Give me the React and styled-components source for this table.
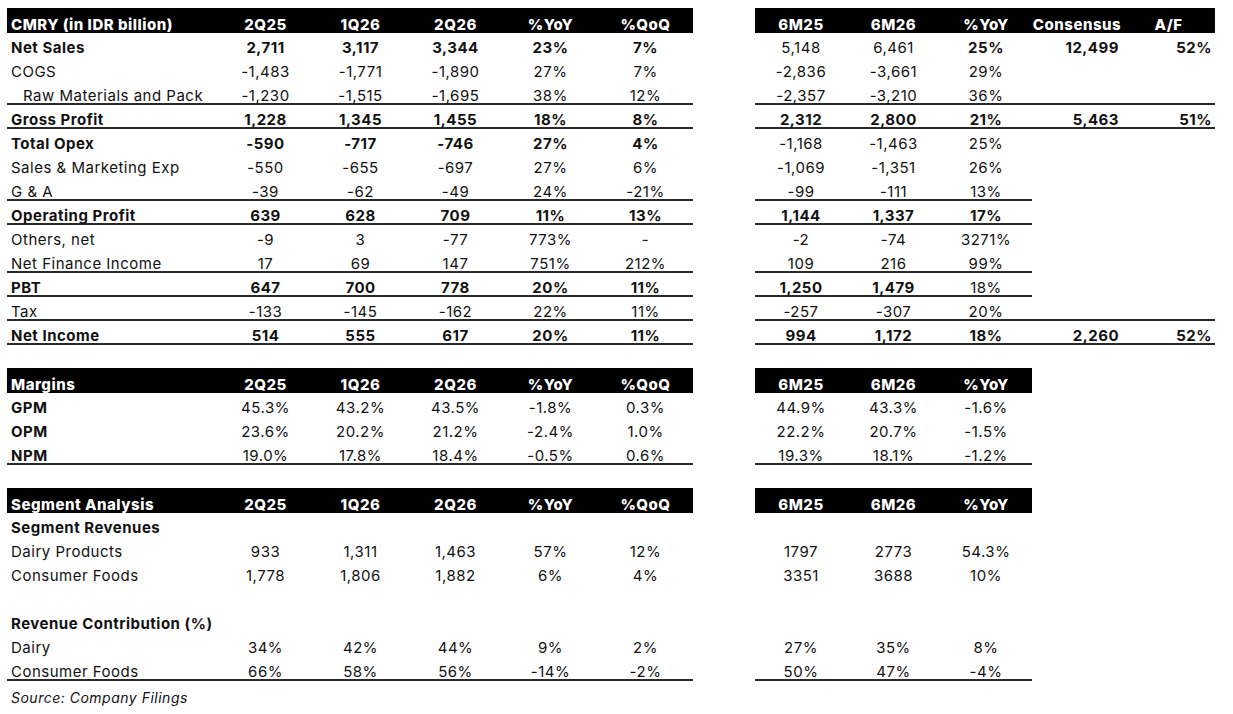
import React from "react";
import styled, { createGlobalStyle } from "styled-components";

const GlobalStyle = createGlobalStyle`
  html, body { margin: 0; background: #fff; }
  body {
    padding: 8px 0 0 7px;
    font-family: Inter, "Noto Sans", "DejaVu Sans", sans-serif;
    color: #111;
    letter-spacing: 0.5px;
    -webkit-font-smoothing: antialiased;
  }
`;

const LEFT_COLS = "211px repeat(5, 95px)";
const RIGHT_FULL = "92px 93px 92px 90px 93px";
const RIGHT_SHORT = "92px 93px 92px";
const LINE = "#2b2b2b";

const Page = styled.div`
  display: flex;
  flex-direction: column;
  gap: 23px;
`;

const Section = styled.section`
  display: flex;
  gap: 62px;
  align-items: flex-start;
`;

const Table = styled.div`
  display: flex;
  flex-direction: column;
`;

const HeaderBar = styled.div`
  display: grid;
  grid-template-columns: ${(p) => p.$cols};
  height: 25px;
  background: #000;
  color: #fff;
  font-weight: 800;
  font-size: 15px;
  line-height: 17px;
  align-items: end;
  box-sizing: border-box;
`;

const HeadCell = styled.div`
  text-align: ${(p) => (p.$left ? "left" : "center")};
  padding-left: ${(p) => (p.$left ? "4px" : "0")};
  white-space: nowrap;
`;

const Row = styled.div`
  display: grid;
  grid-template-columns: ${(p) => p.$cols};
  height: 24px;
  align-items: end;
  font-size: 15px;
  line-height: 18px;
  box-sizing: border-box;
  background: ${(p) =>
    p.$line
      ? `linear-gradient(${LINE}, ${LINE}) no-repeat left bottom / ${p.$line} 2px`
      : "none"};
`;

const Label = styled.div`
  padding-left: ${(p) => (p.$indent ? "16px" : "4px")};
  font-weight: ${(p) => (p.$bold ? 700 : 400)};
  white-space: nowrap;
`;

const Cell = styled.div`
  text-align: ${(p) => (p.$right ? "right" : "center")};
  padding-right: ${(p) => (p.$right ? "3px" : "0")};
  font-weight: ${(p) => (p.$bold ? 700 : 400)};
  white-space: nowrap;
`;

const Source = styled.div`
  font-style: italic;
  font-size: 14px;
  padding: 8px 0 0 4px;
`;

const v = (s, b = false) => ({ s, b });
const B = (arr) => arr.map((s) => v(s, true));
const N = (arr) => arr.map((s) => v(s, false));

const incomeRows = [
  { label: "Net Sales", bold: true, left: B(["2,711", "3,117", "3,344", "23%", "7%"]),
    right: [v("5,148"), v("6,461"), v("25%", true), v("12,499", true), v("52%", true)] },
  { label: "COGS", left: N(["-1,483", "-1,771", "-1,890", "27%", "7%"]), right: N(["-2,836", "-3,661", "29%"]) },
  { label: "Raw Materials and Pack", indent: true, left: N(["-1,230", "-1,515", "-1,695", "38%", "12%"]),
    right: N(["-2,357", "-3,210", "36%"]), line: true, rline: "full" },
  { label: "Gross Profit", bold: true, left: B(["1,228", "1,345", "1,455", "18%", "8%"]),
    right: B(["2,312", "2,800", "21%", "5,463", "51%"]), line: true, rline: "full" },
  { label: "Total Opex", bold: true, left: B(["-590", "-717", "-746", "27%", "4%"]), right: N(["-1,168", "-1,463", "25%"]) },
  { label: "Sales & Marketing Exp", left: N(["-550", "-655", "-697", "27%", "6%"]), right: N(["-1,069", "-1,351", "26%"]) },
  { label: "G & A", left: N(["-39", "-62", "-49", "24%", "-21%"]), right: N(["-99", "-111", "13%"]), line: true, rline: "short" },
  { label: "Operating Profit", bold: true, left: B(["639", "628", "709", "11%", "13%"]),
    right: B(["1,144", "1,337", "17%"]), line: true, rline: "short" },
  { label: "Others, net", left: N(["-9", "3", "-77", "773%", "-"]), right: N(["-2", "-74", "3271%"]) },
  { label: "Net Finance Income", left: N(["17", "69", "147", "751%", "212%"]), right: N(["109", "216", "99%"]), line: true, rline: "short" },
  { label: "PBT", bold: true, left: B(["647", "700", "778", "20%", "11%"]),
    right: [v("1,250", true), v("1,479", true), v("18%")], line: true, rline: "short" },
  { label: "Tax", left: N(["-133", "-145", "-162", "22%", "11%"]), right: N(["-257", "-307", "20%"]), line: true, rline: "full" },
  { label: "Net Income", bold: true, left: B(["514", "555", "617", "20%", "11%"]),
    right: B(["994", "1,172", "18%", "2,260", "52%"]), line: true, rline: "full" },
];

const marginRows = [
  { label: "GPM", bold: true, left: N(["45.3%", "43.2%", "43.5%", "-1.8%", "0.3%"]), right: N(["44.9%", "43.3%", "-1.6%"]) },
  { label: "OPM", bold: true, left: N(["23.6%", "20.2%", "21.2%", "-2.4%", "1.0%"]), right: N(["22.2%", "20.7%", "-1.5%"]) },
  { label: "NPM", bold: true, left: N(["19.0%", "17.8%", "18.4%", "-0.5%", "0.6%"]), right: N(["19.3%", "18.1%", "-1.2%"]),
    line: true, rline: "short" },
];

const segmentRows = [
  { label: "Segment Revenues", bold: true, left: [], right: [] },
  { label: "Dairy Products", left: N(["933", "1,311", "1,463", "57%", "12%"]), right: N(["1797", "2773", "54.3%"]) },
  { label: "Consumer Foods", left: N(["1,778", "1,806", "1,882", "6%", "4%"]), right: N(["3351", "3688", "10%"]) },
  { label: "", left: [], right: [] },
  { label: "Revenue Contribution (%)", bold: true, left: [], right: [] },
  { label: "Dairy", left: N(["34%", "42%", "44%", "9%", "2%"]), right: N(["27%", "35%", "8%"]) },
  { label: "Consumer Foods", left: N(["66%", "58%", "56%", "-14%", "-2%"]), right: N(["50%", "47%", "-4%"]),
    line: true, rline: "short" },
];

const LEFT_HEAD = ["2Q25", "1Q26", "2Q26", "%YoY", "%QoQ"];

function FinTable({ title, rows, rightHead }) {
  const full = rightHead.length === 5;
  const rCols = full ? RIGHT_FULL : RIGHT_SHORT;
  const rWidth = (kind) => (kind === "full" && full ? "460px" : "277px");
  return (
    <Section>
      <Table>
        <HeaderBar $cols={LEFT_COLS}>
          <HeadCell $left>{title}</HeadCell>
          {LEFT_HEAD.map((h) => (
            <HeadCell key={h}>{h}</HeadCell>
          ))}
        </HeaderBar>
        {rows.map((r, i) => (
          <Row key={i} $cols={LEFT_COLS} $line={r.line ? "100%" : null}>
            <Label $bold={r.bold} $indent={r.indent}>{r.label}</Label>
            {r.left.map((c, j) => (
              <Cell key={j} $bold={c.b}>{c.s}</Cell>
            ))}
          </Row>
        ))}
      </Table>
      <Table>
        <HeaderBar $cols={rCols}>
          {rightHead.map((h) => (
            <HeadCell key={h}>{h}</HeadCell>
          ))}
        </HeaderBar>
        {rows.map((r, i) => (
          <Row key={i} $cols={rCols} $line={r.line ? rWidth(r.rline) : null}>
            {r.right.map((c, j) => (
              <Cell key={j} $bold={c.b} $right={j >= 3}>{c.s}</Cell>
            ))}
          </Row>
        ))}
      </Table>
    </Section>
  );
}

export default function App() {
  return (
    <>
      <GlobalStyle />
      <Page>
        <FinTable
          title="CMRY (in IDR billion)"
          rows={incomeRows}
          rightHead={["6M25", "6M26", "%YoY", "Consensus", "A/F"]}
        />
        <FinTable title="Margins" rows={marginRows} rightHead={["6M25", "6M26", "%YoY"]} />
        <div>
          <FinTable title="Segment Analysis" rows={segmentRows} rightHead={["6M25", "6M26", "%YoY"]} />
          <Source>Source: Company Filings</Source>
        </div>
      </Page>
    </>
  );
}
